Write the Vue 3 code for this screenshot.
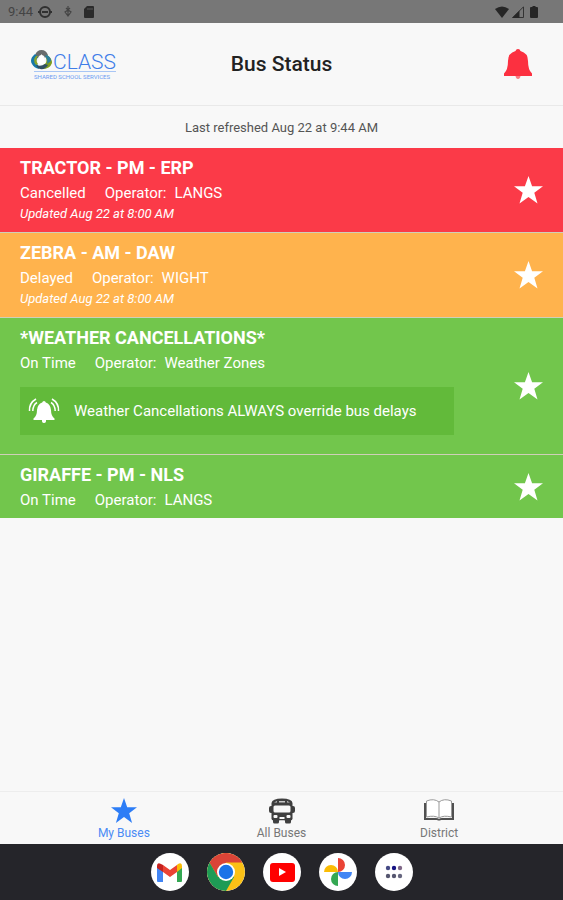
<script setup>
import { ref } from 'vue';

const buses = ref([
  { id: 1, name: 'TRACTOR - PM - ERP', status: 'Cancelled', operator: 'LANGS', updated: 'Aug 22 at 8:00 AM', kind: 'cancelled' },
  { id: 2, name: 'ZEBRA - AM - DAW', status: 'Delayed', operator: 'WIGHT', updated: 'Aug 22 at 8:00 AM', kind: 'delayed' },
  { id: 3, name: '*WEATHER CANCELLATIONS*', status: 'On Time', operator: 'Weather Zones', notice: 'Weather Cancellations ALWAYS override bus delays', kind: 'on-time' },
  { id: 4, name: 'GIRAFFE - PM - NLS', status: 'On Time', operator: 'LANGS', kind: 'on-time' }
]);

const tabs = [
  { id: 'mine', label: 'My Buses' },
  { id: 'all', label: 'All Buses' },
  { id: 'district', label: 'District' }
];
const activeTab = ref('mine');
</script>

<template>
  <div class="screen">
    <div class="status-bar">
      <div class="status-left">
        <span>9:44</span>
        <svg width="14" height="14" viewBox="0 0 14 14">
          <circle cx="7" cy="7" r="5" fill="none" stroke="#303030" stroke-width="2" />
          <path d="M0 7h3M11 7h3M4 7h6" stroke="#303030" stroke-width="2" />
        </svg>
        <svg width="8" height="14" viewBox="0 0 8 14">
          <path d="M4 1v11M1 7l3-2 3 2-3 4zM2 3l2 2 2-2" fill="none" stroke="#444" stroke-width="1.2" />
        </svg>
        <svg width="10" height="12" viewBox="0 0 10 12">
          <path d="M3 0h6q1 0 1 1v10q0 1-1 1H1q-1 0-1-1V3z" fill="#2b2b2b" />
          <path d="M4 2v2M6 2v2M8 2v2" stroke="#666" stroke-width=".8" />
        </svg>
      </div>
      <div class="status-right">
        <svg width="14" height="12" viewBox="0 0 14 12"><path d="M0 3Q7-2 14 3L7 12z" fill="#262626" /></svg>
        <svg width="12" height="12" viewBox="0 0 12 12">
          <path d="M11.5.8v10.7H.8z" fill="none" stroke="#333" />
          <path d="M7.5 4.5V12H0z" fill="#262626" />
        </svg>
        <svg class="battery" width="8" height="12" viewBox="0 0 8 12"><path d="M2.500 0h3v1H7q1 0 1 1v9q0 1-1 1H1q-1 0-1-1V2q0-1 1-1h1.500z" fill="#262626" /></svg>
      </div>
    </div>

    <header class="header">
      <div class="logo">
        <div class="logo-top">
          <svg width="21" height="20" viewBox="0 0 21 20">
            <path d="M4 5Q6 0 10.500 0T17 5l-3 3q-1-3-3.500-3T7 8L4 9z" fill="#686c6d" />
            <path d="M4 4Q-2 9 1 14q2 4 7 5l-1-4Q3 12 7 7z" fill="#1778a8" />
            <path d="M7 6q-3 4 0 8l-2 1q-4-5 0-9z" fill="#8aa52a" />
            <path d="M16 5q5 3 5 8-2 6-10 6l1-4q5-2 3-7z" fill="#7d9c20" />
            <path d="M5 15q5 2 9-1l3 1q-3 5-8 4-3-1-4-4z" fill="#314f63" />
            <path d="M14 6q3 3 2 8l4-3q0-4-4-6z" fill="#2d7f9c" />
            <path d="M10.500 4Q13 9 14.500 13q-4 3-8 0 1.500-5 4-9z" fill="#fff" />
          </svg>
          <span>CLASS</span>
        </div>
        <div class="logo-sub">SHARED SCHOOL SERVICES</div>
      </div>
      <h1>Bus Status</h1>
      <button class="bell-btn" aria-label="Notifications">
        <svg width="28" height="30" viewBox="0 0 28 30">
          <path d="M14 0q2 0 2.500 2Q24 4 24 12q0 9 4 12.500V27H0v-2.500Q4 21 4 12q0-8 7.500-10Q12 0 14 0z" fill="#fc3040" />
          <path d="M11.500 27h5q-.5 3-2.500 3t-2.500-3z" fill="#fc7a82" />
        </svg>
      </button>
    </header>

    <p class="refreshed">Last refreshed Aug 22 at 9:44 AM</p>

    <main class="bus-list">
      <article v-for="bus in buses" :key="bus.id" class="bus" :class="bus.kind">
        <div class="bus-info">
          <h2>{{ bus.name }}</h2>
          <div class="bus-meta">
            <span>{{ bus.status }}</span>
            <span class="operator">Operator:<span>{{ bus.operator }}</span></span>
          </div>
          <div v-if="bus.updated" class="updated">Updated {{ bus.updated }}</div>
          <div v-if="bus.notice" class="notice">
            <svg width="32" height="26" viewBox="0 0 32 26">
              <path d="M16 3q1.500 0 1.800 1.500Q22.500 6 23 12q0 6 3.500 8.500V22h-21v-1.500Q9 18 9 12q.5-6 5.200-7.500Q14.500 3 16 3zM14 22h4v1.500q-.5 1.500-2 1.500t-2-1.500z" fill="#fff" />
              <path d="M8 1Q1 5 1.500 13M9 4.500Q5 7 4.800 13M24 1q7 4 6.500 12M23 4.500q4 2.500 4.200 8.500" fill="none" stroke="#fff" stroke-width="1.500" />
            </svg>
            <span>{{ bus.notice }}</span>
          </div>
        </div>
        <button class="star-btn" aria-label="Favourite">
          <svg width="29" height="28" viewBox="0 0 29 28"><path d="M14.500 0l3.600 10.200H29l-8.700 6.500 3.200 10.800-9-6.500-9 6.500 3.200-10.800L0 10.200h10.900z" fill="#fff" /></svg>
        </button>
      </article>
    </main>

    <nav class="tab-bar">
      <button v-for="tab in tabs" :key="tab.id" class="tab" :class="{ active: tab.id === activeTab }" @click="activeTab = tab.id">
        <svg v-if="tab.id === 'mine'" width="26" height="26" viewBox="0 0 26 26">
          <path d="M13 0l3.200 9.300H26l-7.800 5.900 2.900 9.800-8.100-5.900L4.900 25l2.900-9.800L0 9.300h9.800z" fill="#2d7df6" />
        </svg>
        <svg v-else-if="tab.id === 'all'" width="26" height="26" viewBox="0 0 26 26">
          <path d="M4 20h6v4q0 1.500-1.500 1.500h-3Q4 25.500 4 24zM16 20h6v4q0 1.500-1.500 1.500h-3Q16 25.500 16 24zM0 10q0-2 2-2h1v7H2q-2 0-2-2zM23 8h1q2 0 2 2v3q0 2-2 2h-1z" fill="#3f3f3f" />
          <path d="M2.500 5Q3 .5 13 .5T23.500 5v15.500q0 2-2 2h-17q-2 0-2-2z" fill="#3f3f3f" />
          <rect x="4.500" y="7.500" width="17" height="7" rx="1.500" fill="#f8f8f8" />
          <path d="M5 4.500l3-1.500v1.500zM10 3h6v1.500h-6zM18 3l3 1.500h-3z" fill="#c8c8c8" />
          <rect x="4.500" y="17" width="4" height="3" rx="1" fill="#f8f8f8" />
          <rect x="17.500" y="17" width="4" height="3" rx="1" fill="#f8f8f8" />
          <path d="M10.500 19h5v2h-5zM10.500 22.500h5V26h-5z" fill="#f8f8f8" />
        </svg>
        <svg v-else width="30" height="26" viewBox="0 0 30 26">
          <path d="M0 5h2v15h10q2 0 3 1 1-1 3-1h10V5h2v17H17q-2 1-4 0H0z" fill="#505050" />
          <path d="M15 4Q10 0 2.500 3v16q8-2 12.500 1 4.500-3 12.500-1V3Q20 0 15 4zv16" fill="#fff" stroke="#999" />
        </svg>
        <span>{{ tab.label }}</span>
      </button>
    </nav>

    <div class="dock">
      <button class="app" aria-label="Gmail">
        <svg width="38" height="38" viewBox="0 0 38 38">
          <path d="M6 13v15q0 1 1 1h5V16z" fill="#4285f4" />
          <path d="M26 16v13h4q1 0 1-1V13z" fill="#34a853" />
          <path d="M26 12v7l5-4v-2q0-4-4-2z" fill="#fbbc04" />
          <path d="M12 12l7 5 7-5v7l-7 5-7-5z" fill="#ea4335" />
          <path d="M6 13v2l6 4v-7l-2-1q-4-2-4 2z" fill="#c5221f" />
        </svg>
      </button>
      <button class="app" aria-label="Chrome">
        <svg width="38" height="38" viewBox="0 0 38 38">
          <circle cx="19" cy="19" r="19" fill="#fbc116" />
          <path d="M2.500 9.500A19 19 0 0 1 35.500 9.500H19L10.800 23.700z" fill="#db4437" />
          <path d="M2.500 9.500A19 19 0 0 0 19 38l8.200-14.300H10.800z" fill="#1e9b55" />
          <circle cx="19" cy="19" r="9" fill="#fff" />
          <circle cx="19" cy="19" r="7.200" fill="#1a73e8" />
        </svg>
      </button>
      <button class="app" aria-label="YouTube">
        <svg width="38" height="38" viewBox="0 0 38 38">
          <rect x="7" y="10" width="25" height="19" rx="3" fill="#f00" />
          <path d="M16 15v8l7-4z" fill="#fff" />
        </svg>
      </button>
      <button class="app" aria-label="Photos">
        <svg width="38" height="38" viewBox="0 0 38 38">
          <path d="M19 5a7 7 0 0 1 0 14z" fill="#ea4335" />
          <path d="M33 19a7 7 0 0 1-14 0z" fill="#4285f4" />
          <path d="M19 33a7 7 0 0 1 0-14z" fill="#34a853" />
          <path d="M5 19a7 7 0 0 1 14 0z" fill="#fbbc04" />
        </svg>
      </button>
      <button class="app" aria-label="All apps">
        <svg width="38" height="38" viewBox="0 0 38 38">
          <circle cx="13" cy="15" r="2.200" fill="#454a85" /><circle cx="19" cy="15" r="2.200" fill="#171383" /><circle cx="25" cy="15" r="2.200" fill="#806888" />
          <circle cx="13" cy="23" r="2.200" fill="#55566f" /><circle cx="19" cy="23" r="2.200" fill="#55566f" /><circle cx="25" cy="23" r="2.200" fill="#66667f" />
        </svg>
      </button>
    </div>
  </div>
</template>

<style>
body { background: #f8f8f8; }
</style>

<style scoped>
.screen {
  display: flex; flex-direction: column; min-height: 100vh;
  background: #f8f8f8; color: #222; font-family: Roboto, sans-serif;
}
button { border: none; background: none; padding: 0; font-family: inherit; cursor: pointer; }
svg { display: block; flex: none; }
h1, h2, p { margin: 0; }

.status-bar {
  display: flex; justify-content: space-between; align-items: center;
  height: 23px; padding: 0 25px 0 8px; background: #777; color: #444; font-size: 13px;
}
.status-left { display: flex; align-items: center; gap: 12px; }
.status-left span { margin-right: -7px; }
.status-right { display: flex; align-items: center; gap: 3px; }
.battery { margin-left: 3px; }

.header {
  display: grid; grid-template-columns: 1fr auto 1fr; align-items: center;
  height: 82px; padding: 0 31px; border-bottom: 1px solid #e9e9e9;
}
.header h1 { font-size: 21px; line-height: 28px; font-weight: 500; }
.logo { width: 85px; color: #3f7de8; }
.logo-top { display: flex; align-items: flex-end; gap: 1px; height: 23px; }
.logo-top svg { margin-bottom: 1px; }
.logo-top span { font-size: 21px; font-weight: 300; line-height: 18px; }
.logo-sub { margin-left: 3px; border-top: 1px solid #a8c6f5; font-size: 6px; line-height: 9px; white-space: nowrap; color: #6b9cf2; }
.bell-btn { justify-self: end; }

.refreshed { padding-top: 2px; font-size: 13px; line-height: 40px; text-align: center; color: #555; }

.bus-list { flex: 1; }
.bus {
  display: flex; align-items: center; gap: 60px;
  padding: 8px 20px 5px; border-top: 1px solid #cfcfb8; color: #fff;
}
.bus:first-child { border-top: none; }
.bus-info { flex: 1; min-width: 0; }
.cancelled { background: #fb3a48; }
.delayed { background: #ffb34d; }
.on-time { background: #72c64c; }
.bus h2 { font-size: 18px; line-height: 24px; font-weight: 700; }
.bus-meta { display: flex; gap: 19px; font-size: 15px; line-height: 26px; }
.operator { display: flex; gap: 8px; }
.updated { margin-bottom: 5px; font-size: 13px; line-height: 16px; font-style: italic; }
.notice {
  display: flex; align-items: center; gap: 14px; min-height: 48px;
  margin: 11px 0 14px; padding: 0 8px; background: #62ba3a; font-size: 15px; box-sizing: border-box;
}
.star-btn { padding-bottom: 3px; }

.tab-bar { display: flex; justify-content: center; height: 52px; border-top: 1px solid #ededed; }
.tab {
  flex: 0 1 28%; display: flex; flex-direction: column; align-items: center;
  padding-top: 6px; font-size: 12px; line-height: 18px; color: #777;
}
.tab.active { color: #4a8bf5; }

.dock {
  display: flex; justify-content: center; align-items: center; gap: 18px;
  height: 56px; background: #25252a;
}
.app { width: 38px; height: 38px; border-radius: 50%; background: #fff; overflow: hidden; }
</style>
